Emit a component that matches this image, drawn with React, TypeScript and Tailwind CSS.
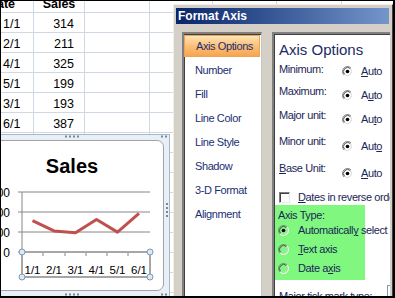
import React from 'react'

const font = { fontFamily: '"Liberation Sans", Arial, sans-serif' }

const sheetCols = ['w-[64px]', 'w-[51px]', 'w-[65px]', 'w-[63px]', 'w-[64px]', 'w-[65px]', 'w-[64px]']
const sheetData = [
  ['1/1', '314'],
  ['2/1', '211'],
  ['4/1', '325'],
  ['5/1', '199'],
  ['3/1', '193'],
  ['6/1', '387'],
]

// chart points, sorted by date
const series = [314, 211, 193, 325, 199, 387]
const catX = [32.5, 54, 75.5, 96.5, 117.5, 139]

const Radio = ({ on = false, fill = 'white' }: { on?: boolean; fill?: string }) => (
  <svg width="11" height="11" viewBox="0 0 12 12" className="shrink-0">
    <circle cx="6" cy="6" r="5.5" fill={fill} />
    <path d="M9.89 2.11 A5.5 5.5 0 0 0 2.11 9.89" fill="none" stroke="#808080" />
    <path d="M9.18 2.82 A4.5 4.5 0 0 0 2.82 9.18" fill="none" stroke="#404040" />
    <path d="M2.11 9.89 A5.5 5.5 0 0 0 9.89 2.11" fill="none" stroke="#ffffff" />
    <path d="M2.82 9.18 A4.5 4.5 0 0 0 9.18 2.82" fill="none" stroke="#d4d0c8" />
    {on && <circle cx="6" cy="6" r="2" fill="#000" />}
  </svg>
)

const U = ({ children }: { children: React.ReactNode }) => (
  <span className="underline underline-offset-[1px]">{children}</span>
)

const Sheet = () => (
  <div className="-ml-[30px] -mt-[7px] flex flex-col text-[12.5px] text-black">
    <div className="flex h-[20px]">
      {sheetCols.map((w, i) => (
        <div key={i} className={`${w} shrink-0 border-r border-b border-[#d0d7e5] flex items-end justify-center font-bold leading-[15px]`}>
          {i === 0 ? 'Date' : i === 1 ? 'Sales' : ''}
        </div>
      ))}
    </div>
    {Array.from({ length: 15 }).map((_, r) => (
      <div key={r} className="flex h-[20px]">
        {sheetCols.map((w, i) => (
          <div
            key={i}
            className={`${w} shrink-0 border-r border-b border-[#d0d7e5] flex items-end leading-[15px] ${
              i === 0 ? 'pl-[33px]' : i === 1 ? 'justify-end pr-[10px]' : ''
            }`}
          >
            {sheetData[r] && i < 2 ? sheetData[r][i] : ''}
          </div>
        ))}
      </div>
    ))}
  </div>
)

const Chart = () => {
  const pts = series.map((v, i) => `${catX[i]},${252 - v / 10}`).join(' ')
  return (
    <div className="absolute left-[-10px] top-[134px] w-[180px] h-[163px] border border-[#a9b8c6] bg-[#e8eff6] p-[5px]">
      {/* grips */}
      <svg className="absolute left-0 top-0 w-full h-full overflow-visible pointer-events-none">
        <g transform="translate(9,-135)" fill="#7d8893">
          {[65, 69, 73, 77].map(x => (
            <rect key={'t' + x} x={x} y={135.5} width="2" height="2" />
          ))}
          {[65, 69, 73, 77].map(x => (
            <rect key={'b' + x} x={x} y={293.5} width="2" height="2" />
          ))}
          {[203, 207, 211, 215].map(y => (
            <rect key={'r' + y} x={166} y={y} width="2" height="2" />
          ))}
          <rect x={161} y={135.5} width="2" height="2" />
          <rect x={165} y={135.5} width="2" height="2" />
          <rect x={161} y={293.5} width="2" height="2" />
          <rect x={165} y={293.5} width="2" height="2" />
        </g>
      </svg>
      <div className="relative h-full rounded-r-[7px] border border-[#a3a3a3] bg-white overflow-hidden">
        <svg className="absolute left-0 top-0 w-full h-full overflow-visible">
          <g transform="translate(3,-141)" style={font}>
            <text x="72" y="173" textAnchor="middle" fontSize="20" fontWeight="bold" fill="#000">
              Sales
            </text>
            {[192, 212, 232].map(y => (
              <line key={y} x1="18" x2="150" y1={y} y2={y} stroke="#868686" strokeWidth="1" />
            ))}
            <line x1="22" x2="22" y1="192" y2="252" stroke="#868686" />
            <line x1="18" x2="150" y1="252" y2="252" stroke="#868686" />
            {[22, 43, 65, 86, 107, 128, 150].map(x => (
              <line key={x} x1={x} x2={x} y1="252" y2="256" stroke="#868686" />
            ))}
            {[
              ['600', 196.5],
              ['400', 216.5],
              ['200', 236.5],
              ['0', 256.5],
            ].map(([t, y]) => (
              <text key={t} x="10" y={y} textAnchor="end" fontSize="12" fill="#000">
                {t}
              </text>
            ))}
            <polyline points={pts} fill="none" stroke="#c0504d" strokeWidth="3" strokeLinejoin="round" />
            <rect x="22" y="252" width="128" height="25" fill="none" stroke="#a6a6a6" strokeWidth="2" />
            {['1/1', '2/1', '3/1', '4/1', '5/1', '6/1'].map((t, i) => (
              <text key={t} x={catX[i]} y="274" textAnchor="middle" fontSize="11.5" fill="#000">
                {t}
              </text>
            ))}
            {[
              [22, 252],
              [150, 252],
              [22, 277],
              [150, 277],
            ].map(([x, y]) => (
              <circle key={`${x}-${y}`} cx={x} cy={y} r="3" fill="#dfe8f1" stroke="#7d98b5" />
            ))}
          </g>
        </svg>
      </div>
    </div>
  )
}

const navItems = ['Axis Options', 'Number', 'Fill', 'Line Color', 'Line Style', 'Shadow', '3-D Format', 'Alignment']

const unitRows: { label: React.ReactNode; auto: React.ReactNode; row: string; off: string }[] = [
  { label: 'Minimum:', auto: <><U>A</U>uto</>, row: 'h-[22px]', off: 'mt-[2px]' },
  { label: 'Maximum:', auto: <>A<U>u</U>to</>, row: 'h-[24px]', off: 'mt-[4px]' },
  { label: 'Major unit:', auto: <>Au<U>t</U>o</>, row: 'h-[26px]', off: 'mt-[4px]' },
  { label: 'Minor unit:', auto: <>Aut<U>o</U></>, row: 'h-[27px]', off: 'mt-[5px]' },
  { label: <><U>B</U>ase Unit:</>, auto: <><U>A</U>uto</>, row: 'h-[28px]', off: 'mt-[5px]' },
]

const Dialog = () => (
  <div className="absolute left-[173px] top-[4px] w-[220px] h-[310px] bg-[#d4d0c8] border-l border-t border-[#efeee9] border-r border-r-[#404040]">
    <div className="ml-[2px] mr-[3px] mt-[3px] h-[16px] bg-linear-to-r from-[#0a246a] to-[#7596cb] flex items-center pl-[2px] text-white font-bold text-[12px]">
      Format Axis
    </div>
    <div className="flex pt-[8px] pl-[8px] h-full">
      <div className="w-[80px] shrink-0 bg-white border-l-2 border-t-2 border-[#808080] border-r border-r-[#c9c6bf] shadow-[inset_1px_1px_0_#404040] text-[11px] tracking-[-0.4px] text-[#1a2f72]">
        {navItems.map((t, i) => (
          <div key={t} className="h-[24px] flex items-center">
            {i === 0 ? (
              <div className="h-[22px] w-full mr-[1px] flex items-center pl-[11px] bg-linear-to-b from-[#fee3b3] via-[#fbbf78] to-[#f7a54e] border border-[#eba55a]">
                {t}
              </div>
            ) : (
              <div className="pl-[11px]">{t}</div>
            )}
          </div>
        ))}
      </div>
      <div className="ml-[10px] mr-[2px] flex-1 min-w-0 bg-white border-l-2 border-t-2 border-[#808080] shadow-[inset_1px_1px_0_#404040] overflow-hidden pl-[5px] text-[11px] tracking-[-0.4px] text-[#1b2656]">
        <div className="pt-[7px] text-[15px] leading-[17px] tracking-normal text-[#1b2b64] whitespace-nowrap">Axis Options</div>
        <div className="mt-[5px]">
          {unitRows.map((r, i) => (
            <div key={i} className={`${r.row} flex items-start`}>
              <div className="w-[63px] shrink-0 leading-[13px] whitespace-nowrap">{r.label}</div>
              <div className={`${r.off} flex items-center h-[13px]`}>
                <Radio on />
                <span className="ml-[8px] leading-[13px]">{r.auto}</span>
              </div>
            </div>
          ))}
        </div>
        <div className="h-[14px] flex items-center whitespace-nowrap">
          <div className="w-[11px] h-[11px] shrink-0 bg-white border border-t-[#808080] border-l-[#808080] border-r-[#e8e8e8] border-b-[#e8e8e8] shadow-[inset_1px_1px_0_#404040]" />
          <span className="ml-[8px] leading-[13px]">
            <U>D</U>ates in reverse order
          </span>
        </div>
        <div className="mt-[1px] -ml-[4px] w-[90px] h-[75px] bg-[#80f880] pl-[3px] pt-[5px]">
          <div className="leading-[11px] whitespace-nowrap">Axis Type:</div>
          <div className="h-[19px] flex items-center whitespace-nowrap">
            <Radio on fill="#80f880" />
            <span className="ml-[9px]">
              Automaticall<U>y</U> select based on data
            </span>
          </div>
          <div className="h-[19px] flex items-center whitespace-nowrap">
            <Radio fill="#80f880" />
            <span className="ml-[9px]">
              <U>T</U>ext axis
            </span>
          </div>
          <div className="h-[19px] flex items-center whitespace-nowrap">
            <Radio fill="#80f880" />
            <span className="ml-[9px]">
              Date a<U>x</U>is
            </span>
          </div>
        </div>
        <div className="mt-[5px] flex">
          <div className="mt-[5px] leading-[13px] whitespace-nowrap">Major tick mark type:</div>
          <div className="ml-auto w-[3px] h-[16px] border-l border-t border-[#7f9db9]" />
        </div>
      </div>
    </div>
  </div>
)

export default function App() {
  return (
    <div className="relative w-[395px] h-[298px] overflow-hidden bg-white" style={font}>
      <Sheet />
      <Chart />
      <Dialog />
      <div className="absolute inset-0 border-t border-l border-r-2 border-b-2 border-black pointer-events-none" />
    </div>
  )
}
